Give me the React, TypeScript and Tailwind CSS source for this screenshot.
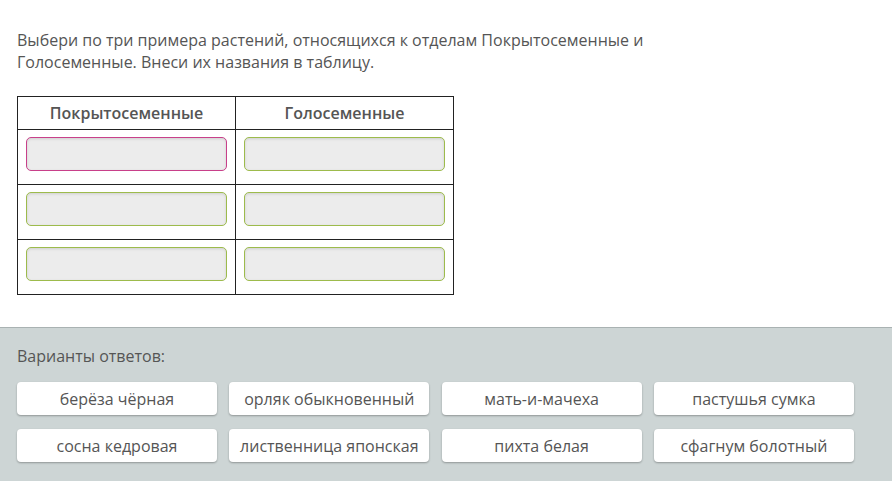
const answers = [
  'берёза чёрная',
  'орляк обыкновенный',
  'мать-и-мачеха',
  'пастушья сумка',
  'сосна кедровая',
  'лиственница японская',
  'пихта белая',
  'сфагнум болотный',
];

function Slot({ active }: { active?: boolean }) {
  return (
    <div
      className={`h-[34px] w-[201px] rounded-[5px] border bg-[#ececec] shadow-[inset_0_1px_3px_rgba(0,0,0,0.12)] ${
        active ? 'border-[#c8408a]' : 'border-[#9dbb4c]'
      }`}
    />
  );
}

export default function App() {
  return (
    <div className="h-[481px] w-[892px] overflow-hidden bg-white font-['Open_Sans',sans-serif] text-[#555]">
      <div className="h-[327px] px-[17px] pt-[29px]">
        <p className="w-[680px] text-[16px] leading-[22px]">
          Выбери по три примера растений, относящихся к отделам Покрытосеменные и Голосеменные. Внеси их названия в таблицу.
        </p>
        <table className="mt-[23px] w-[437px] border-collapse">
          <thead>
            <tr className="h-[33px]">
              <th className="w-[218px] border border-[#222] text-[16px] font-semibold text-[#555]">Покрытосеменные</th>
              <th className="border border-[#222] text-[16px] font-semibold text-[#555]">Голосеменные</th>
            </tr>
          </thead>
          <tbody>
            {[0, 1, 2].map((r) => (
              <tr key={r} className="h-[55px]">
                <td className="border border-[#222] px-[8px] pt-[7px] align-top">
                  <Slot active={r === 0} />
                </td>
                <td className="border border-[#222] px-[8px] pt-[7px] align-top">
                  <Slot />
                </td>
              </tr>
            ))}
          </tbody>
        </table>
      </div>
      <div className="h-[154px] border-t border-[#a9b2b2] bg-[#cdd5d5] px-[17px] pt-[17px]">
        <p className="text-[16px] leading-[22px] text-[#555]">Варианты ответов:</p>
        <div className="mt-[15px] grid grid-cols-[repeat(4,200px)] gap-x-[12.3px] gap-y-[14px]">
          {answers.map((a) => (
            <div
              key={a}
              className="flex h-[33px] items-center justify-center rounded-[4px] bg-white text-[16px] text-[#555] shadow-[0_1px_2px_rgba(0,0,0,0.3)]"
            >
              {a}
            </div>
          ))}
        </div>
      </div>
    </div>
  );
}
